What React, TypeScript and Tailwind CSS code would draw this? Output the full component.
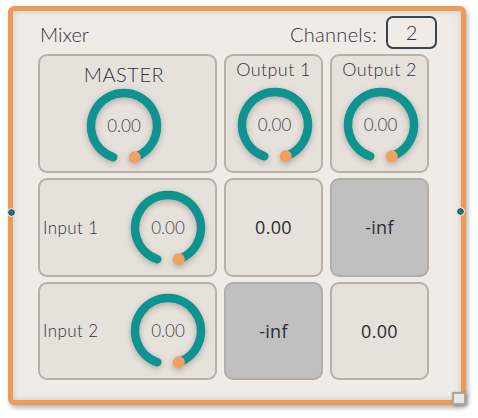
import React from 'react';

const light = { fontFamily: 'Lato, "Open Sans", sans-serif' };

const Knob: React.FC<{ value: string }> = ({ value }) => {
  // arc from bottom-left, over the top, to bottom-right where the handle sits
  const cx = 40;
  const cy = 40;
  const r = 33;
  const a = (19 * Math.PI) / 180;
  const x1 = cx - r * Math.sin(a);
  const y1 = cy + r * Math.cos(a);
  const x2 = cx + r * Math.sin(a);
  const y2 = cy + r * Math.cos(a);
  return (
    <div className="relative w-[80px] h-[80px] shrink-0">
      <svg
        width="80"
        height="80"
        viewBox="0 0 80 80"
        className="drop-shadow-[0_2px_3px_rgba(0,0,0,0.25)]"
      >
        <path
          d={`M ${x1} ${y1} A ${r} ${r} 0 1 1 ${x2} ${y2}`}
          fill="none"
          stroke="#0e9391"
          strokeWidth="8.5"
          strokeLinecap="round"
        />
        <circle cx={x2} cy={y2} r="6" fill="#f0a160" />
      </svg>
      <div
        className="absolute inset-0 flex items-center justify-center text-[17px] font-light text-[#3f434b]"
        style={light}
      >
        {value}
      </div>
    </div>
  );
};

const Card: React.FC<{ className?: string; children?: React.ReactNode }> = ({
  className = '',
  children,
}) => (
  <div
    className={`rounded-[9px] border-2 border-[#b8b1a8] bg-[#e7e1db] ${className}`}
  >
    {children}
  </div>
);

const ValueCell: React.FC<{ value: string; muted?: boolean }> = ({ value, muted }) => (
  <div
    className={`rounded-[9px] border-2 flex items-center justify-center text-[18px] text-[#2a2d33] tracking-[0.3px] ${
      muted ? 'bg-[#c0c0c0] border-[#b2ada6]' : 'bg-[#e7e1db] border-[#b8b1a8]'
    }`}
    style={{ fontFamily: '"Open Sans", Lato, sans-serif' }}
  >
    {value}
  </div>
);

const App: React.FC = () => {
  return (
    <div className="w-[478px] h-[418px] bg-white pt-[6px] pl-[8px]" style={light}>
      <div className="relative w-[458px] h-[399px] rounded-[6px] border-[5px] border-[#ee9b58] bg-[#efebe6] shadow-[inset_0_0_7px_rgba(0,0,0,0.14),2px_3px_5px_rgba(0,0,0,0.3)]">
        {/* header */}
        <div className="flex items-center justify-between h-[34px] mt-[4px] pl-[27px] pr-[24px]">
          <span className="text-[20px] font-light text-[#30343c] pt-[4px]">Mixer</span>
          <div className="flex items-center gap-[9px]">
            <span className="text-[20px] font-light text-[#30343c] pt-[4px] tracking-[0.3px]">
              Channels:
            </span>
            <div className="w-[51px] h-[33px] rounded-[7px] border-2 border-[#3b444b] flex items-center justify-center text-[20px] font-light text-[#30343c]">
              2
            </div>
          </div>
        </div>

        {/* matrix */}
        <div className="mt-[5px] ml-[25px] grid grid-cols-[179px_99px_99px] grid-rows-[119px_99px_98px] gap-x-[7px] gap-y-[5px]">
          <Card className="flex flex-col items-center pr-[7px]">
            <div className="mt-[6px] h-[24px] text-[20px] font-light text-[#30343c] leading-[24px] tracking-[0.5px]">
              MASTER
            </div>
            <Knob value="0.00" />
          </Card>
          <Card className="flex flex-col items-center">
            <div className="mt-[2px] h-[24px] text-[18px] font-light text-[#30343c] leading-[22px] tracking-[0.4px]">
              Output 1
            </div>
            <div className="mt-[3px] ml-[2px]">
              <Knob value="0.00" />
            </div>
          </Card>
          <Card className="flex flex-col items-center">
            <div className="mt-[2px] h-[24px] text-[18px] font-light text-[#30343c] leading-[22px] tracking-[0.4px]">
              Output 2
            </div>
            <div className="mt-[3px] ml-[2px]">
              <Knob value="0.00" />
            </div>
          </Card>

          <Card className="flex items-center">
            <div className="w-[88px] pl-[3px] text-[17px] font-light text-[#30343c] tracking-[0.4px]">
              Input 1
            </div>
            <Knob value="0.00" />
          </Card>
          <ValueCell value="0.00" />
          <ValueCell value="-inf" muted />

          <Card className="flex items-center">
            <div className="w-[88px] pl-[3px] text-[17px] font-light text-[#30343c] tracking-[0.4px]">
              Input 2
            </div>
            <Knob value="0.00" />
          </Card>
          <ValueCell value="-inf" muted />
          <ValueCell value="0.00" />
        </div>

        {/* ports and resize handle */}
        <div className="absolute left-[-6px] top-[197px] w-[9px] h-[9px] rounded-full bg-[#2f6a72] border-[1.5px] border-white" />
        <div className="absolute left-[443px] top-[196px] w-[9px] h-[9px] rounded-full bg-[#2f6a72] border-[1.5px] border-white" />
        <div className="absolute left-[439px] top-[381px] w-[14px] h-[13px] border-2 border-[#aaa6a0] bg-[#ebe6e0] shadow-[1px_1px_3px_rgba(0,0,0,0.3)]" />
      </div>
    </div>
  );
};

export default App;
